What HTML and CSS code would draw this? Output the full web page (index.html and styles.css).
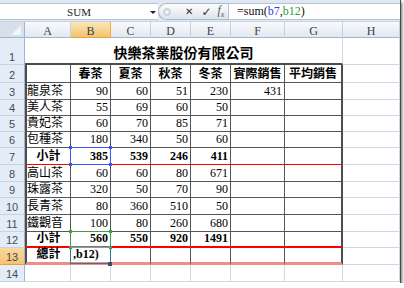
FILE: index.html
```html
<!DOCTYPE html>
<html lang="zh-Hant">

<head>
  <meta charset="UTF-8">
  <meta name="viewport" content="width=device-width, initial-scale=1.0">
  <link rel="stylesheet" href="styles.css">
  <title>快樂茶業股份有限公司</title>
</head>

<body>

  <div id="window">
    <div id="formula-bar">
      <div id="name-box"><span>SUM</span><span class="drop"></span></div>
      <div id="fx-buttons">
        <span class="dot"></span>
        <span class="btn-x">✕</span>
        <span class="btn-ok">✓</span>
        <span class="btn-fx">f<sub>x</sub></span>
      </div>
      <div id="formula-input">=sum(<span class="ref-blue">b7</span>,<span class="ref-green">b12</span>)</div>
    </div>

    <div id="sheet">
      <!-- column headers -->
      <div class="corner"></div>
      <div class="colhead">A</div>
      <div class="colhead active">B</div>
      <div class="colhead">C</div>
      <div class="colhead">D</div>
      <div class="colhead">E</div>
      <div class="colhead">F</div>
      <div class="colhead">G</div>
      <div class="colhead">H</div>

      <!-- row 1 -->
      <div class="rowhead">1</div>
      <div class="title">快樂茶業股份有限公司</div>
      <div class="g"></div>

      <!-- row 2 -->
      <div class="rowhead">2</div>
      <div class="t first"></div>
      <div class="t hd">春茶</div>
      <div class="t hd">夏茶</div>
      <div class="t hd">秋茶</div>
      <div class="t hd">冬茶</div>
      <div class="t hd">實際銷售</div>
      <div class="t hd last">平均銷售</div>
      <div class="g"></div>

      <!-- row 3 -->
      <div class="rowhead">3</div>
      <div class="t first name">龍泉茶</div>
      <div class="t num">90</div>
      <div class="t num">60</div>
      <div class="t num">51</div>
      <div class="t num">230</div>
      <div class="t num">431</div>
      <div class="t last"></div>
      <div class="g"></div>

      <!-- row 4 -->
      <div class="rowhead">4</div>
      <div class="t first name">美人茶</div>
      <div class="t num">55</div>
      <div class="t num">69</div>
      <div class="t num">60</div>
      <div class="t num">50</div>
      <div class="t"></div>
      <div class="t last"></div>
      <div class="g"></div>

      <!-- row 5 -->
      <div class="rowhead">5</div>
      <div class="t first name">貴妃茶</div>
      <div class="t num">60</div>
      <div class="t num">70</div>
      <div class="t num">85</div>
      <div class="t num">71</div>
      <div class="t"></div>
      <div class="t last"></div>
      <div class="g"></div>

      <!-- row 6 -->
      <div class="rowhead">6</div>
      <div class="t first name">包種茶</div>
      <div class="t num">180</div>
      <div class="t num">340</div>
      <div class="t num">50</div>
      <div class="t num">60</div>
      <div class="t"></div>
      <div class="t last"></div>
      <div class="g"></div>

      <!-- row 7 -->
      <div class="rowhead">7</div>
      <div class="t first sub line-red">小計</div>
      <div class="t num bold line-red ref"><span class="ref-box blue"></span>385</div>
      <div class="t num bold line-red">539</div>
      <div class="t num bold line-red">246</div>
      <div class="t num bold line-red">411</div>
      <div class="t line-red"></div>
      <div class="t last line-red"></div>
      <div class="g"></div>

      <!-- row 8 -->
      <div class="rowhead">8</div>
      <div class="t first name">高山茶</div>
      <div class="t num">60</div>
      <div class="t num">60</div>
      <div class="t num">80</div>
      <div class="t num">671</div>
      <div class="t"></div>
      <div class="t last"></div>
      <div class="g"></div>

      <!-- row 9 -->
      <div class="rowhead">9</div>
      <div class="t first name">珠露茶</div>
      <div class="t num">320</div>
      <div class="t num">50</div>
      <div class="t num">70</div>
      <div class="t num">90</div>
      <div class="t"></div>
      <div class="t last"></div>
      <div class="g"></div>

      <!-- row 10 -->
      <div class="rowhead">10</div>
      <div class="t first name">長青茶</div>
      <div class="t num">80</div>
      <div class="t num">360</div>
      <div class="t num">510</div>
      <div class="t num">50</div>
      <div class="t"></div>
      <div class="t last"></div>
      <div class="g"></div>

      <!-- row 11 -->
      <div class="rowhead">11</div>
      <div class="t first name">鐵觀音</div>
      <div class="t num">100</div>
      <div class="t num">80</div>
      <div class="t num">260</div>
      <div class="t num">680</div>
      <div class="t"></div>
      <div class="t last"></div>
      <div class="g"></div>

      <!-- row 12 -->
      <div class="rowhead">12</div>
      <div class="t first sub line-red2">小計</div>
      <div class="t num bold line-red2 ref"><span class="ref-box green"></span>560</div>
      <div class="t num bold line-red2">550</div>
      <div class="t num bold line-red2">920</div>
      <div class="t num bold line-red2">1491</div>
      <div class="t line-red2"></div>
      <div class="t last line-red2"></div>
      <div class="g"></div>

      <!-- row 13 -->
      <div class="rowhead active">13</div>
      <div class="t first sub line-pink">總計</div>
      <div class="t bold line-pink ref"><span class="edit-box"></span>,b12)</div>
      <div class="t line-pink"></div>
      <div class="t line-pink"></div>
      <div class="t line-pink"></div>
      <div class="t line-pink"></div>
      <div class="t last line-pink"></div>
      <div class="g"></div>

      <!-- row 14 -->
      <div class="rowhead">14</div>
      <div class="g"></div>
      <div class="g"></div>
      <div class="g"></div>
      <div class="g"></div>
      <div class="g"></div>
      <div class="g"></div>
      <div class="g"></div>
      <div class="g"></div>
    </div>
  </div>

</body>

</html>
```

FILE: styles.css
```css
body {
  margin: 0;
  background-color: #fff;
  font-family: 'Liberation Serif', 'Noto Sans CJK TC', serif;
  font-size: 12px;
  color: #000;
}

#window {
  width: 400px;
  height: 283px;
  border-right: 1px solid #4a4a4a;
  box-shadow: 1px 2px 3px rgba(0, 0, 0, 0.6);
  overflow: hidden;
  background-color: #fff;
}

/* formula bar */

#formula-bar {
  display: flex;
  height: 22px;
  box-sizing: border-box;
  padding: 3px 0 1px;
  background-color: #dfe7f1;
  border-bottom: 1px solid #c9d4e2;
}

#name-box {
  width: 158px;
  display: flex;
  align-items: center;
  justify-content: center;
  position: relative;
  background-color: #fff;
  border-top: 1px solid #b4c4d8;
  border-bottom: 1px solid #b4c4d8;
  font-size: 11px;
  color: #222;
}

#name-box .drop {
  position: absolute;
  left: 150px;
  top: 7px;
  border-left: 3px solid transparent;
  border-right: 3px solid transparent;
  border-top: 3px solid #222;
}

#fx-buttons {
  width: 70px;
  display: flex;
  align-items: center;
  box-sizing: border-box;
  background: linear-gradient(#fdfdfe, #dde4ec);
  border: 1px solid #aab9cc;
  border-right: none;
  border-radius: 9px 0 0 9px;
  color: #333;
}

#fx-buttons .dot {
  width: 6px;
  height: 6px;
  margin-left: 4px;
  border-radius: 50%;
  background: radial-gradient(#fff, #b9c3cf);
  border: 1px solid #c6ced8;
}

#fx-buttons .btn-x {
  margin-left: 14px;
  font-family: 'DejaVu Sans', sans-serif;
  font-size: 10px;
}

#fx-buttons .btn-ok {
  margin-left: 8px;
  font-family: 'DejaVu Sans', sans-serif;
  font-size: 12px;
}

#fx-buttons .btn-fx {
  margin-left: 6px;
  font-style: italic;
  font-size: 12px;
  color: #555;
}

#fx-buttons .btn-fx sub {
  font-size: 8px;
}

#formula-input {
  flex: 1;
  display: flex;
  align-items: center;
  padding-left: 8px;
  background-color: #fff;
  border: 1px solid #b4c4d8;
  border-right: none;
  font-size: 12px;
  color: #111;
}

.ref-blue {
  color: #3040e8;
}

.ref-green {
  color: #2f9a3a;
}

/* sheet grid */

#sheet {
  display: grid;
  grid-template-columns: 25px 46px 40px 40px 40px 40px 54px 58px 57px;
  grid-template-rows: 16px 27px 18px 17px 16px 16px 16px 17px 17px 16px 17px 17px 16px 17px 17px;
}

#sheet > div {
  box-sizing: border-box;
  white-space: nowrap;
}

.corner {
  position: relative;
  background-color: #d6dfea;
  border-right: 1px solid #9eb6ce;
  border-bottom: 1px solid #9eb6ce;
}

.corner::after {
  content: '';
  position: absolute;
  right: 3px;
  bottom: 2px;
  border-left: 10px solid transparent;
  border-bottom: 10px solid #f1f4f8;
}

.colhead {
  display: flex;
  align-items: flex-start;
  justify-content: center;
  padding-top: 2px;
  line-height: 14px;
  background: linear-gradient(#f8fafc, #e2e8f0);
  border-right: 1px solid #c5d1df;
  border-bottom: 1px solid #9eb6ce;
  color: #3a3f47;
}

.colhead.active {
  background: linear-gradient(#fbe5b9, #f2c46f);
  border-right-color: #f2a94a;
  border-bottom-color: #e8a13c;
}

.rowhead {
  display: flex;
  align-items: flex-end;
  justify-content: center;
  line-height: 13px;
  background-color: #e4ecf7;
  border-right: 1px solid #9eb6ce;
  border-bottom: 1px solid #c5d3e3;
  font-family: 'Liberation Sans', sans-serif;
  font-size: 11px;
  color: #3e4d60;
}

.rowhead.active {
  background: linear-gradient(#fad99d, #f3c46f);
  border-bottom-color: #e8a13c;
}

.g {
  border-right: 1px solid #d0d7e5;
  border-bottom: 1px solid #d0d7e5;
}

.title {
  grid-column: span 7;
  display: flex;
  align-items: flex-end;
  justify-content: center;
  padding-bottom: 3px;
  border-right: 1px solid #d0d7e5;
  border-bottom: 2px solid #4d4d4d;
  font-family: 'Noto Sans CJK TC', sans-serif;
  font-size: 14px;
  font-weight: bold;
  line-height: 16px;
}

/* table cells */

.t {
  display: flex;
  align-items: flex-end;
  line-height: 15px;
  padding: 0 2px;
  border-right: 1px solid #555;
  border-bottom: 1px solid #555;
}

.t.first {
  border-left: 2px solid #4d4d4d;
}

.t.last {
  border-right: 2px solid #4d4d4d;
}

.t.name {
  padding-left: 0;
}

.t.hd {
  justify-content: center;
  font-weight: bold;
}

.t.num {
  justify-content: flex-end;
}

.t.sub {
  justify-content: center;
  font-weight: bold;
}

.bold {
  font-weight: bold;
}

.line-red {
  border-bottom-color: #f00 !important;
}

.line-red2 {
  border-bottom: 2px solid #f00 !important;
}

.line-pink {
  border-bottom: 3px solid #f28a8a !important;
}

/* reference highlights */

.ref {
  position: relative;
}

.ref-box,
.edit-box {
  position: absolute;
  left: -1px;
  top: -1px;
  right: -1px;
  bottom: -1px;
  border: 1px solid #3b55f0;
}

.ref-box::before,
.edit-box::after {
  content: '';
  position: absolute;
  left: -2px;
  top: -2px;
  width: 3px;
  height: 3px;
}

.ref-box.blue::before {
  background-color: #3b55f0;
  box-shadow: 40px 0 0 #3b55f0, 0 17px 0 #3b55f0, 40px 17px 0 #3b55f0;
}

.ref-box.green {
  border-color: #3ea03e;
}

.ref-box.green::before {
  background-color: #3ea03e;
  box-shadow: 40px 0 0 #3ea03e, 0 16px 0 #3ea03e, 40px 16px 0 #3ea03e;
}

.edit-box {
  bottom: -2px;
  border-color: #2c7f8a;
  border-top-color: #d26bd2;
}

.edit-box::after {
  left: 37px;
  top: 14px;
  width: 4px;
  height: 4px;
  background-color: #40505e;
}
```
